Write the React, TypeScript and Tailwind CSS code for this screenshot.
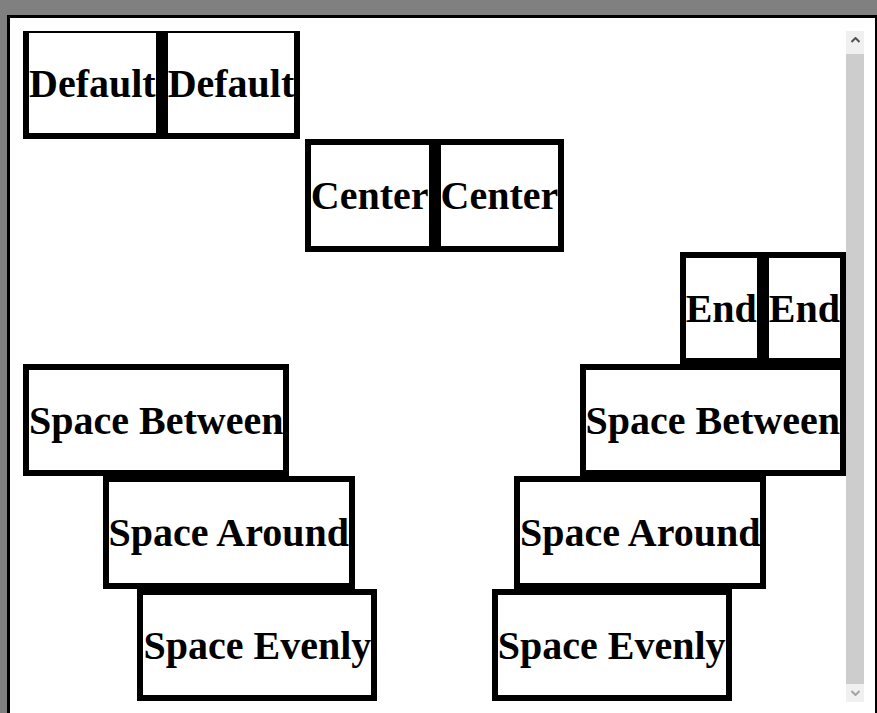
import React from 'react';

const rows: { label: string; justify: string }[] = [
  { label: 'Default', justify: 'justify-start' },
  { label: 'Center', justify: 'justify-center' },
  { label: 'End', justify: 'justify-end' },
  { label: 'Space Between', justify: 'justify-between' },
  { label: 'Space Around', justify: 'justify-around' },
  { label: 'Space Evenly', justify: 'justify-evenly' },
];

const Box = ({ label }: { label: string }) => (
  <div className="flex h-[112.33px] items-center whitespace-nowrap border-[6px] border-black bg-white pt-[2px] text-[40px] font-bold leading-[46px] text-black">
    {label}
  </div>
);

const Chevron = ({ up, color }: { up: boolean; color: string }) => (
  <svg width="9" height="6" viewBox="0 0 9 6" className={up ? '' : 'rotate-180'}>
    <path d="M0.5 5 L4.5 1 L8.5 5" fill="none" stroke={color} strokeWidth="2" />
  </svg>
);

const Scrollbar = () => (
  <div className="flex w-[18px] flex-col bg-[#f0f0f0]">
    <div className="flex h-[18px] items-center justify-center">
      <Chevron up color="#505050" />
    </div>
    <div className="flex flex-1 flex-col pt-[5px]">
      <div className="flex-1 bg-[#cdcdcd]" />
    </div>
    <div className="flex h-[18px] items-center justify-center">
      <Chevron up={false} color="#a3a3a3" />
    </div>
  </div>
);

export default function App() {
  return (
    <div
      className="h-[713px] w-[877px] overflow-hidden bg-[#808080] pl-[7px] pt-[15px]"
      style={{ fontFamily: '"Liberation Serif", "Times New Roman", serif' }}
    >
      <div className="h-[720px] w-[871px] border-[3px] border-black bg-white pl-[13px] pt-[13px]">
        <div className="flex h-[671px] w-[841px]">
          {/* scrolled to the bottom: top 4px of content hidden */}
          <div className="h-full w-[823px] overflow-hidden">
            <div className="-mt-[4px] flex flex-col">
              {rows.map((row) => (
                <div key={row.label} className={`flex ${row.justify}`}>
                  <Box label={row.label} />
                  <Box label={row.label} />
                </div>
              ))}
            </div>
          </div>
          <Scrollbar />
        </div>
      </div>
    </div>
  );
}
